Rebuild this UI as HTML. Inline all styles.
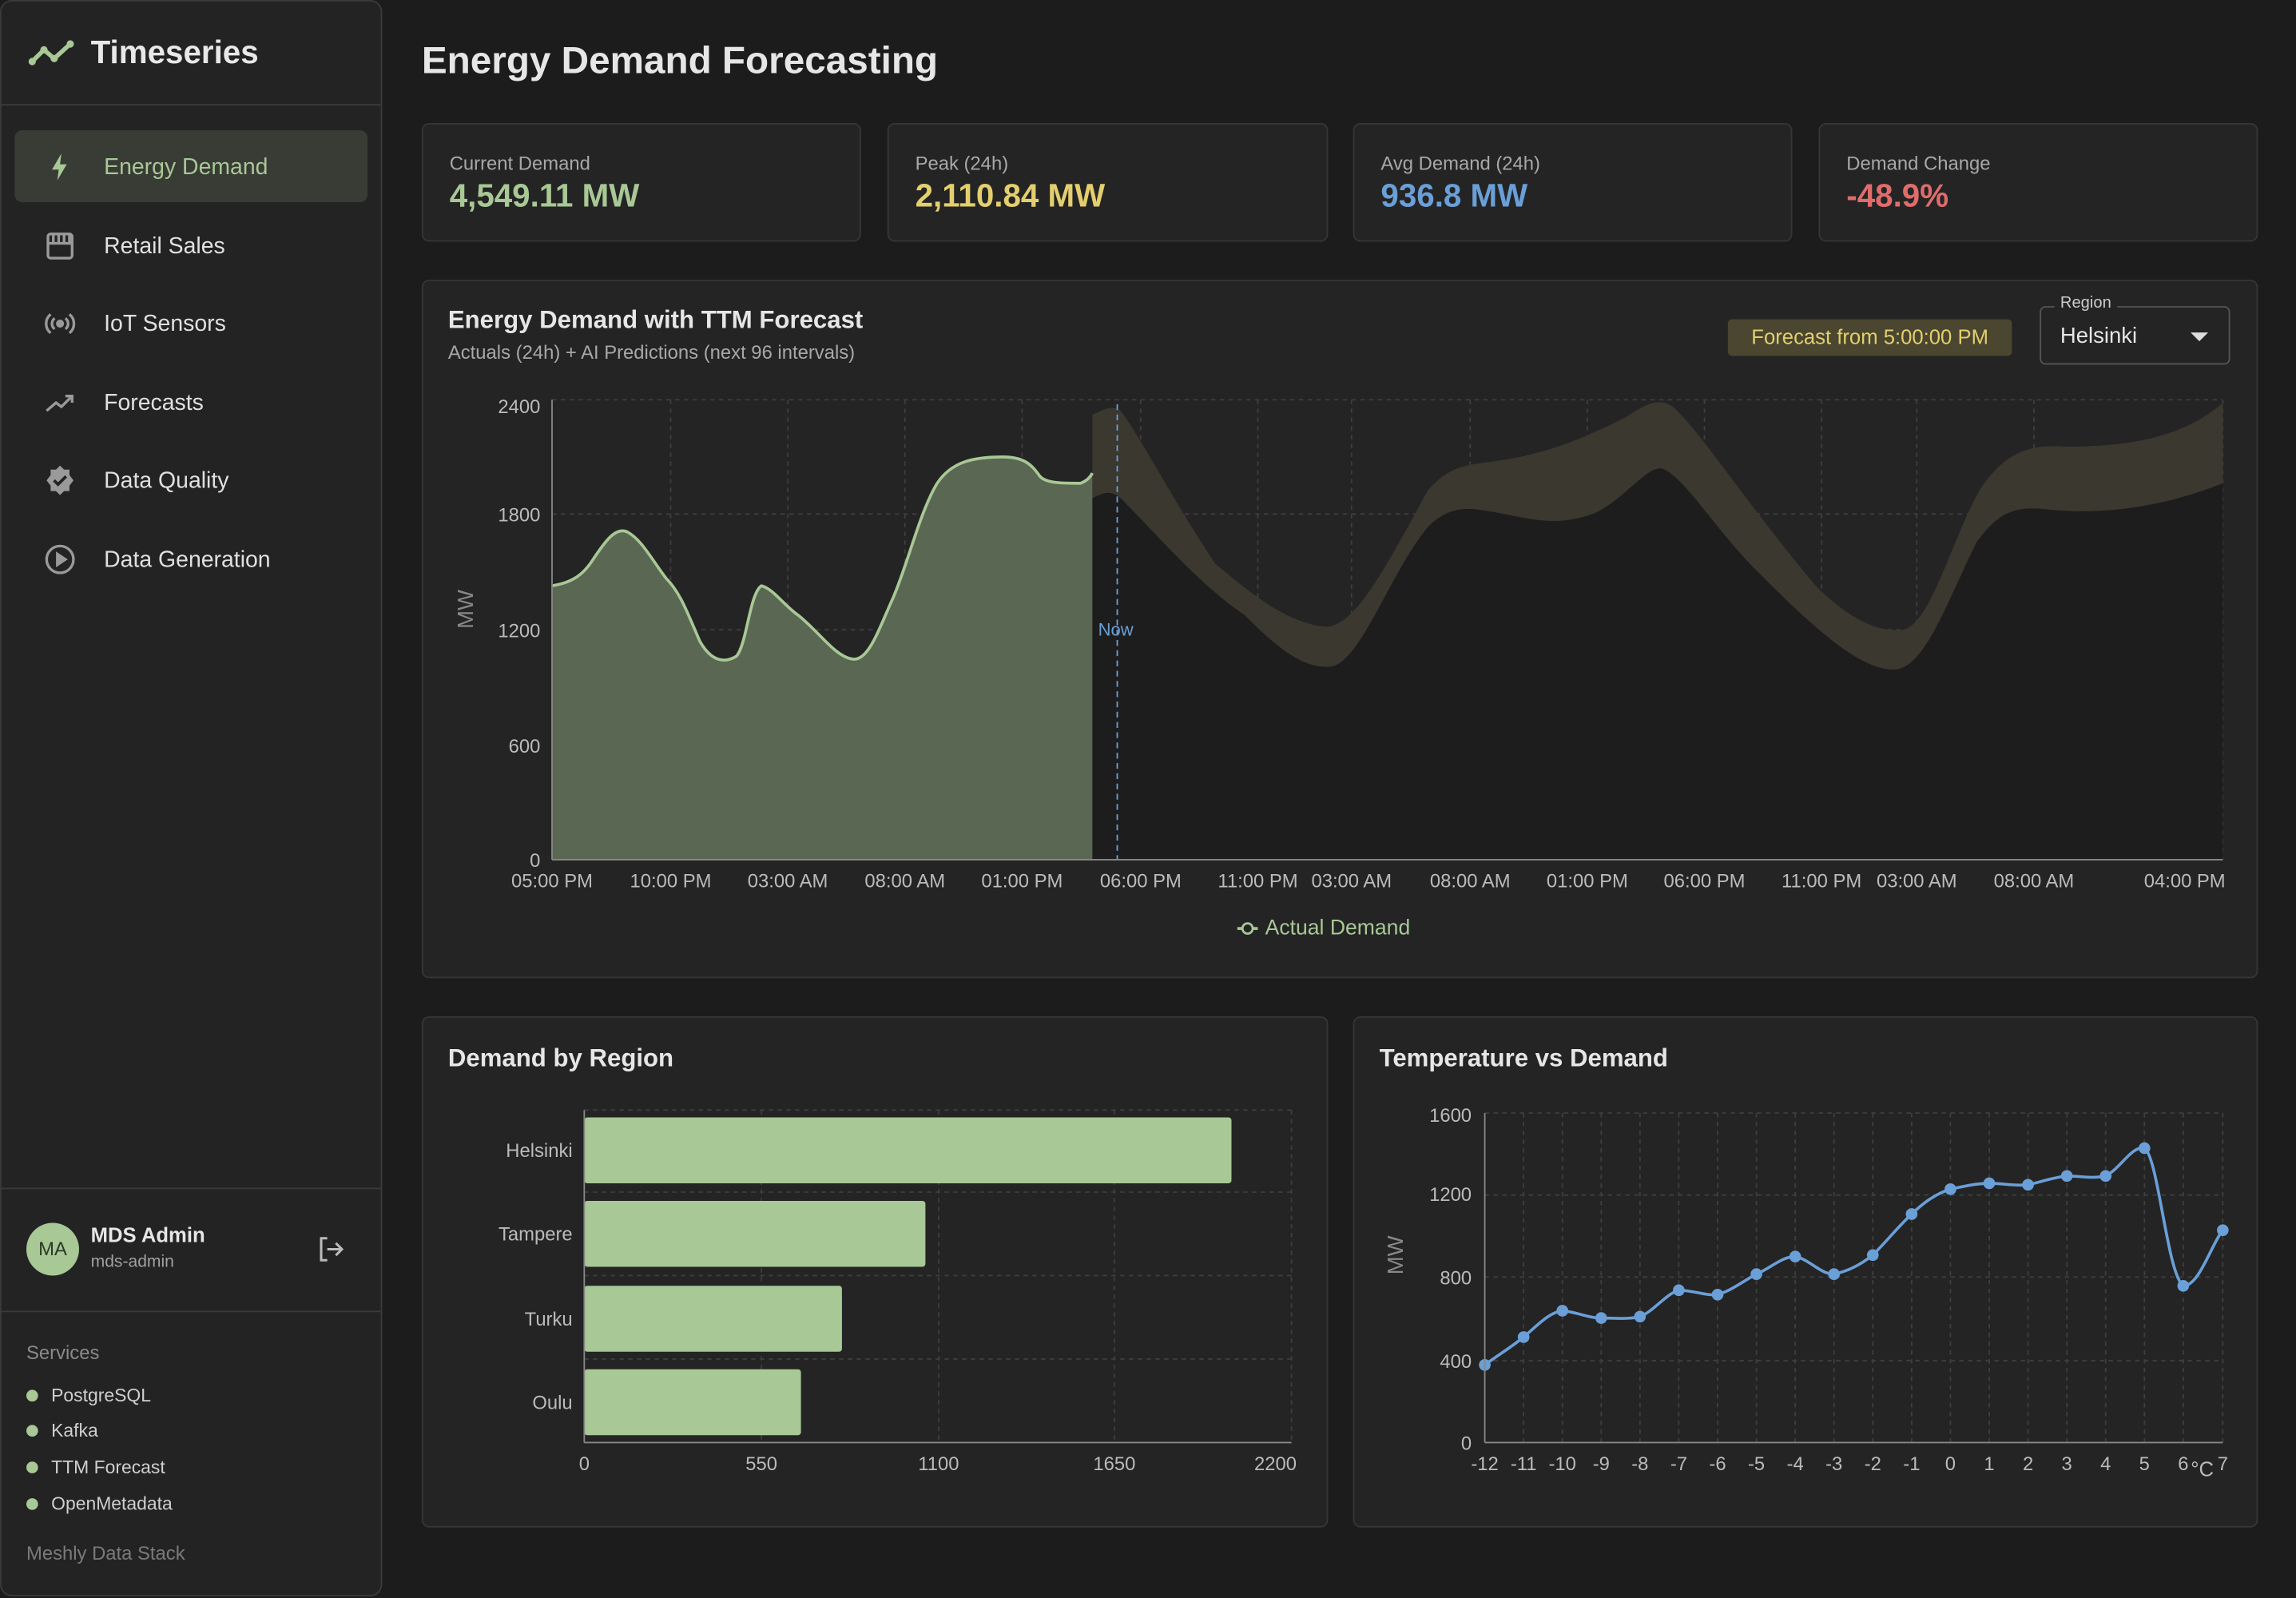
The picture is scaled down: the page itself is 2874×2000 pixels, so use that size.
<!DOCTYPE html>
<html><head><meta charset="utf-8"><style>
html,body{margin:0;padding:0;background:#1c1c1c;width:2874px;height:2000px;overflow:hidden}
#w{position:absolute;left:0;top:0;width:1568px;height:1091px;transform:scale(1.83291);transform-origin:0 0;font-family:"Liberation Sans",sans-serif;color:#e6e6e6}
.a{position:absolute}
.card{position:absolute;background:#242424;border:1px solid #363636;border-radius:5px;box-sizing:border-box}
.lbl{font-size:13px;color:#a8a8a8;position:absolute;left:18px;top:19px}
.val{font-size:22px;font-weight:bold;position:absolute;left:18px;top:36px}
.nav{position:absolute;left:10px;width:241px;height:49px;font-size:15.5px;color:#e0e0e0}
.nav svg{position:absolute;left:20px;top:14px}
.nav span{position:absolute;left:61px;top:17px}
.svc{position:absolute;left:18px;font-size:12.5px;color:#cfcfcf}
.svc i{display:inline-block;width:8px;height:8px;border-radius:50%;background:#a8c896;margin-right:9px;vertical-align:0px}
</style></head><body><div id="w">
<div class="a" style="left:0;top:0;width:261px;height:1090px;background:#232323;border:1px solid #3a3a3a;border-radius:8px;box-sizing:border-box"></div>
<div class="a" style="left:1px;top:71px;width:259px;height:1px;background:#3a3a3a"></div>
<svg class="a" style="left:19px;top:25px" width="34" height="22" viewBox="0 0 34 22"><polyline points="3,17 11,9 18,15 29,5" fill="none" stroke="#a8c896" stroke-width="3" stroke-linecap="round" stroke-linejoin="round"/><circle cx="3" cy="17" r="2.5" fill="#a8c896"/><circle cx="11" cy="9" r="2.5" fill="#a8c896"/><circle cx="18" cy="15" r="2.5" fill="#a8c896"/><circle cx="29" cy="5" r="2.5" fill="#a8c896"/></svg>
<div class="a" style="left:62px;top:23px;font-size:22px;font-weight:bold;color:#e8e8e8">Timeseries</div>
<div class="nav" style="top:89px;background:#393b35;border-radius:5px;color:#a8c896"><svg width="22" height="22" viewBox="0 0 24 24"><path d="M13 2L6 14h5l-1 8 7-12h-5z" fill="#a8c896"/></svg><span>Energy Demand</span></div>
<div class="nav" style="top:143px"><svg width="22" height="22" viewBox="0 0 24 24" fill="none" stroke="#9a9a9a" stroke-width="2"><rect x="3" y="3" width="18" height="18" rx="2"/><path d="M3 10h18M7 4v5M11 4v5M15 4v5M19 4v5"/></svg><span>Retail Sales</span></div>
<div class="nav" style="top:196px"><svg width="22" height="22" viewBox="0 0 24 24" fill="none" stroke="#9a9a9a" stroke-width="2"><circle cx="12" cy="12" r="2" fill="#9a9a9a"/><path d="M8 8a5 5 0 000 8M16 8a5 5 0 010 8M5 5a9 9 0 000 14M19 5a9 9 0 010 14"/></svg><span>IoT Sensors</span></div>
<div class="nav" style="top:250px"><svg width="22" height="22" viewBox="0 0 24 24" fill="none" stroke="#9a9a9a" stroke-width="2"><path d="M2 18l7-6 4 3 8-8M16 7h5v5"/></svg><span>Forecasts</span></div>
<div class="nav" style="top:303px"><svg width="22" height="22" viewBox="0 0 24 24"><path d="M12 1l3 3h4v4l3 4-3 4v4h-4l-3 3-3-3H5v-4l-3-4 3-4V4h4z" fill="#9a9a9a"/><path d="M7.5 12l3 3 6-6" fill="none" stroke="#232323" stroke-width="2.2"/></svg><span>Data Quality</span></div>
<div class="nav" style="top:357px"><svg width="22" height="22" viewBox="0 0 24 24" fill="none" stroke="#9a9a9a" stroke-width="2"><circle cx="12" cy="12" r="10"/><path d="M10 8l6 4-6 4z" fill="#9a9a9a"/></svg><span>Data Generation</span></div>
<div class="a" style="left:1px;top:811px;width:259px;height:1px;background:#3a3a3a"></div>
<div class="a" style="left:18px;top:835px;width:36px;height:36px;border-radius:50%;background:#a8c896;color:#2c3a26;font-size:13px;text-align:center;line-height:36px">MA</div>
<div class="a" style="left:62px;top:835px;font-size:14px;font-weight:bold">MDS Admin</div>
<div class="a" style="left:62px;top:856px;font-size:11.5px;color:#a0a0a0">mds-admin</div>
<svg class="a" style="left:216px;top:843px" width="20" height="20" viewBox="0 0 24 24" fill="none" stroke="#bbb" stroke-width="2"><path d="M9 3H4v18h5M16 7l5 5-5 5M21 12H9"/></svg>
<div class="a" style="left:1px;top:895px;width:259px;height:1px;background:#3a3a3a"></div>
<div class="a" style="left:18px;top:916px;font-size:13px;color:#8a8a8a">Services</div>
<div class="svc" style="top:946px"><i></i>PostgreSQL</div>
<div class="svc" style="top:970px"><i></i>Kafka</div>
<div class="svc" style="top:995px"><i></i>TTM Forecast</div>
<div class="svc" style="top:1020px"><i></i>OpenMetadata</div>
<div class="a" style="left:18px;top:1053px;font-size:13px;color:#7a7a7a">Meshly Data Stack</div>

<div class="a" style="left:288px;top:26px;font-size:26px;font-weight:bold;color:#e6e6e6">Energy Demand Forecasting</div>
<div class="card" style="left:288px;top:84px;width:300px;height:81px"><div class="lbl">Current Demand</div><div class="val" style="color:#a8c896">4,549.11 MW</div></div>
<div class="card" style="left:606px;top:84px;width:301px;height:81px"><div class="lbl">Peak (24h)</div><div class="val" style="color:#e3cf6e">2,110.84 MW</div></div>
<div class="card" style="left:924px;top:84px;width:300px;height:81px"><div class="lbl">Avg Demand (24h)</div><div class="val" style="color:#6a9fd8">936.8 MW</div></div>
<div class="card" style="left:1242px;top:84px;width:300px;height:81px"><div class="lbl">Demand Change</div><div class="val" style="color:#e06c6c">-48.9%</div></div>

<div class="card" style="left:288px;top:191px;width:1254px;height:477px"></div>
<div class="a" style="left:306px;top:209px;font-size:17px;font-weight:bold">Energy Demand with TTM Forecast</div>
<div class="a" style="left:306px;top:233px;font-size:13px;color:#a8a8a8">Actuals (24h) + AI Predictions (next 96 intervals)</div>
<div class="a" style="left:1180px;top:218px;width:194px;height:25px;background:#4a4630;border-radius:3px;color:#e3cf6e;font-size:14px;text-align:center;line-height:25px">Forecast from 5:00:00 PM</div>
<div class="a" style="left:1393px;top:209px;width:130px;height:40px;border:1px solid #555;border-radius:4px;box-sizing:border-box"></div>
<div class="a" style="left:1403px;top:201px;background:#242424;padding:0 4px;font-size:11px;color:#ccc">Region</div>
<div class="a" style="left:1407px;top:221px;font-size:15px">Helsinki</div>
<svg class="a" style="left:1496px;top:226px" width="12" height="8"><path d="M0 1h12L6 7z" fill="#ddd"/></svg>

<svg class="a" style="left:0;top:0" width="1568" height="1091" font-family="Liberation Sans, sans-serif">
<g stroke="#3e3e3e" stroke-dasharray="3,3" stroke-width="1">
<line x1="377" x2="1518" y1="273" y2="273"/><line x1="377" x2="1518" y1="351" y2="351"/><line x1="377" x2="1518" y1="430" y2="430"/><line x1="377" x2="1518" y1="509" y2="509"/>
<line x1="458" x2="458" y1="273" y2="587"/><line x1="538" x2="538" y1="273" y2="587"/><line x1="618" x2="618" y1="273" y2="587"/><line x1="698" x2="698" y1="273" y2="587"/><line x1="779" x2="779" y1="273" y2="587"/><line x1="859" x2="859" y1="273" y2="587"/><line x1="923" x2="923" y1="273" y2="587"/><line x1="1004" x2="1004" y1="273" y2="587"/><line x1="1084" x2="1084" y1="273" y2="587"/><line x1="1164" x2="1164" y1="273" y2="587"/><line x1="1244" x2="1244" y1="273" y2="587"/><line x1="1309" x2="1309" y1="273" y2="587"/><line x1="1389" x2="1389" y1="273" y2="587"/><line x1="1518" x2="1518" y1="273" y2="587"/>
</g>
<path d="M746,340 C755,336 760,333 770,345 C790,365 820,400 850,420 C870,440 890,458 910,455 C930,450 950,390 975,360 C985,350 995,346 1010,348 C1040,352 1060,362 1090,350 C1110,340 1125,318 1135,320 C1150,325 1170,360 1200,390 C1230,420 1270,460 1295,457 C1315,455 1330,410 1350,370 C1365,350 1375,345 1400,348 C1440,352 1480,345 1518,330 L1518,587 L746,587 Z" fill="#1d1d1d"/>
<path d="M746,283 C752,281 758,276 765,280 C780,300 800,340 830,385 C860,410 880,425 905,428 C925,428 945,390 975,335 C990,318 1000,318 1020,315 C1060,310 1090,295 1110,285 C1125,275 1135,270 1145,280 C1165,300 1190,340 1240,400 C1265,425 1285,432 1300,430 C1320,425 1335,360 1355,330 C1370,310 1385,303 1410,305 C1450,305 1490,300 1518,275 L1518,330 C1480,345 1440,352 1400,348 C1375,345 1365,350 1350,370 C1330,410 1315,455 1295,457 C1270,460 1230,420 1200,390 C1170,360 1150,325 1135,320 C1125,318 1110,340 1090,350 C1060,362 1040,352 1010,348 C995,346 985,350 975,360 C950,390 930,450 910,455 C890,458 870,440 850,420 C820,400 790,365 770,345 C760,333 755,336 746,340 Z" fill="#3a382f"/>
<path d="M377,400 C390,398 398,393 405,382 C413,370 420,360 428,363 C438,368 445,382 455,395 C465,405 470,420 478,438 C486,452 495,453 503,448 C510,440 512,405 520,400 C528,402 535,413 545,420 C560,432 570,448 582,450 C593,452 600,430 610,408 C620,385 628,350 640,330 C650,315 665,312 685,312 C700,312 705,318 710,325 C714,330 725,330 738,330 C743,328 745,325 746,323 L746,587 L377,587 Z" fill="#5a6753"/>
<path d="M377,400 C390,398 398,393 405,382 C413,370 420,360 428,363 C438,368 445,382 455,395 C465,405 470,420 478,438 C486,452 495,453 503,448 C510,440 512,405 520,400 C528,402 535,413 545,420 C560,432 570,448 582,450 C593,452 600,430 610,408 C620,385 628,350 640,330 C650,315 665,312 685,312 C700,312 705,318 710,325 C714,330 725,330 738,330 C743,328 745,325 746,323" fill="none" stroke="#a8c896" stroke-width="2"/>
<line x1="763" x2="763" y1="276" y2="587" stroke="#6a9fd8" stroke-dasharray="4,3"/>
<text x="750" y="434" font-size="12" fill="#6a9fd8">Now</text>
<line x1="377" x2="377" y1="273" y2="587" stroke="#888"/><line x1="377" x2="1518" y1="587" y2="587" stroke="#888"/>
<g font-size="13" fill="#bbb" text-anchor="end"><text x="369" y="282">2400</text><text x="369" y="356">1800</text><text x="369" y="435">1200</text><text x="369" y="514">600</text><text x="369" y="592">0</text></g>
<text x="323" y="416" font-size="15" fill="#888" text-anchor="middle" transform="rotate(-90 323 416)">MW</text>
<g font-size="13" fill="#bbb" text-anchor="middle"><text x="377" y="606">05:00 PM</text><text x="458" y="606">10:00 PM</text><text x="538" y="606">03:00 AM</text><text x="618" y="606">08:00 AM</text><text x="698" y="606">01:00 PM</text><text x="779" y="606">06:00 PM</text><text x="859" y="606">11:00 PM</text><text x="923" y="606">03:00 AM</text><text x="1004" y="606">08:00 AM</text><text x="1084" y="606">01:00 PM</text><text x="1164" y="606">06:00 PM</text><text x="1244" y="606">11:00 PM</text><text x="1309" y="606">03:00 AM</text><text x="1389" y="606">08:00 AM</text><text x="1492" y="606">04:00 PM</text></g>
<line x1="845" x2="859" y1="634" y2="634" stroke="#a8c896" stroke-width="2"/><circle cx="852" cy="634" r="3.5" fill="#242424" stroke="#a8c896" stroke-width="1.5"/>
<text x="864" y="638" font-size="14.5" fill="#a8c896">Actual Demand</text>
</svg>

<div class="card" style="left:288px;top:694px;width:619px;height:349px"></div>
<div class="card" style="left:924px;top:694px;width:618px;height:349px"></div>
<div class="a" style="left:306px;top:713px;font-size:17px;font-weight:bold">Demand by Region</div>
<div class="a" style="left:942px;top:713px;font-size:17px;font-weight:bold">Temperature vs Demand</div>
<svg class="a" style="left:0;top:0" width="1568" height="1091" font-family="Liberation Sans, sans-serif">
<g stroke="#3e3e3e" stroke-dasharray="3,3"><line x1="520" x2="520" y1="758" y2="985"/><line x1="641" x2="641" y1="758" y2="985"/><line x1="761" x2="761" y1="758" y2="985"/><line x1="882" x2="882" y1="758" y2="985"/><line x1="399" x2="882" y1="758" y2="758"/><line x1="399" x2="882" y1="814" y2="814"/><line x1="399" x2="882" y1="871" y2="871"/><line x1="399" x2="882" y1="928" y2="928"/></g>
<g fill="#a8c896"><rect x="399" y="763" width="442" height="45" rx="2"/><rect x="399" y="820" width="233" height="45" rx="2"/><rect x="399" y="878" width="176" height="45" rx="2"/><rect x="399" y="935" width="148" height="45" rx="2"/></g>
<line x1="399" x2="399" y1="758" y2="985" stroke="#888"/><line x1="399" x2="882" y1="985" y2="985" stroke="#888"/>
<g font-size="13" fill="#bbb" text-anchor="end"><text x="391" y="790">Helsinki</text><text x="391" y="847">Tampere</text><text x="391" y="905">Turku</text><text x="391" y="962">Oulu</text></g>
<g font-size="13" fill="#bbb" text-anchor="middle"><text x="399" y="1004">0</text><text x="520" y="1004">550</text><text x="641" y="1004">1100</text><text x="761" y="1004">1650</text><text x="871" y="1004">2200</text></g>

<g stroke="#3e3e3e" stroke-dasharray="3,3"><line x1="1014" x2="1518" y1="760" y2="760"/><line x1="1014" x2="1518" y1="816" y2="816"/><line x1="1014" x2="1518" y1="872" y2="872"/><line x1="1014" x2="1518" y1="929" y2="929"/>
<line x1="1040.5" x2="1040.5" y1="760" y2="985"/><line x1="1067" x2="1067" y1="760" y2="985"/><line x1="1093.5" x2="1093.5" y1="760" y2="985"/><line x1="1120" x2="1120" y1="760" y2="985"/><line x1="1146.5" x2="1146.5" y1="760" y2="985"/><line x1="1173" x2="1173" y1="760" y2="985"/><line x1="1199.5" x2="1199.5" y1="760" y2="985"/><line x1="1226" x2="1226" y1="760" y2="985"/><line x1="1252.5" x2="1252.5" y1="760" y2="985"/><line x1="1279" x2="1279" y1="760" y2="985"/><line x1="1305.5" x2="1305.5" y1="760" y2="985"/><line x1="1332" x2="1332" y1="760" y2="985"/><line x1="1358.5" x2="1358.5" y1="760" y2="985"/><line x1="1385" x2="1385" y1="760" y2="985"/><line x1="1411.5" x2="1411.5" y1="760" y2="985"/><line x1="1438" x2="1438" y1="760" y2="985"/><line x1="1464.5" x2="1464.5" y1="760" y2="985"/><line x1="1491" x2="1491" y1="760" y2="985"/><line x1="1518" x2="1518" y1="760" y2="985"/></g>
<path d="M1014,932 C1022,926 1032,920 1040.5,913 C1050,905 1058,896 1067,895 C1077,896 1085,900 1093.5,900 C1103,900 1112,901 1120,899 C1130,895 1137,884 1146.5,881 C1156,881 1165,885 1173,884 C1183,881 1190,875 1199.5,870 C1209,866 1217,858 1226,858 C1236,860 1243,870 1252.5,870 C1262,868 1270,864 1279,857 C1288,848 1296,838 1305.5,829 C1314,821 1322,815 1332,812 C1341,810 1350,808 1358.5,808 C1368,808 1376,810 1385,809 C1394,807 1402,804 1411.5,803 C1421,803 1429,805 1438,803 C1448,798 1456,782 1464.5,784 C1474,790 1480,870 1491,878 C1502,878 1510,850 1518,840" fill="none" stroke="#6a9fd8" stroke-width="2"/>
<g fill="#6a9fd8"><circle cx="1014" cy="932" r="4"/><circle cx="1040.5" cy="913" r="4"/><circle cx="1067" cy="895" r="4"/><circle cx="1093.5" cy="900" r="4"/><circle cx="1120" cy="899" r="4"/><circle cx="1146.5" cy="881" r="4"/><circle cx="1173" cy="884" r="4"/><circle cx="1199.5" cy="870" r="4"/><circle cx="1226" cy="858" r="4"/><circle cx="1252.5" cy="870" r="4"/><circle cx="1279" cy="857" r="4"/><circle cx="1305.5" cy="829" r="4"/><circle cx="1332" cy="812" r="4"/><circle cx="1358.5" cy="808" r="4"/><circle cx="1385" cy="809" r="4"/><circle cx="1411.5" cy="803" r="4"/><circle cx="1438" cy="803" r="4"/><circle cx="1464.5" cy="784" r="4"/><circle cx="1491" cy="878" r="4"/><circle cx="1518" cy="840" r="4"/></g>
<line x1="1014" x2="1014" y1="760" y2="985" stroke="#888"/><line x1="1014" x2="1518" y1="985" y2="985" stroke="#888"/>
<g font-size="13" fill="#bbb" text-anchor="end"><text x="1005" y="766">1600</text><text x="1005" y="820">1200</text><text x="1005" y="877">800</text><text x="1005" y="934">400</text><text x="1005" y="990">0</text></g>
<text x="958" y="857" font-size="15" fill="#888" text-anchor="middle" transform="rotate(-90 958 857)">MW</text>
<g font-size="13" fill="#bbb" text-anchor="middle"><text x="1014" y="1004">-12</text><text x="1040.5" y="1004">-11</text><text x="1067" y="1004">-10</text><text x="1093.5" y="1004">-9</text><text x="1120" y="1004">-8</text><text x="1146.5" y="1004">-7</text><text x="1173" y="1004">-6</text><text x="1199.5" y="1004">-5</text><text x="1226" y="1004">-4</text><text x="1252.5" y="1004">-3</text><text x="1279" y="1004">-2</text><text x="1305.5" y="1004">-1</text><text x="1332" y="1004">0</text><text x="1358.5" y="1004">1</text><text x="1385" y="1004">2</text><text x="1411.5" y="1004">3</text><text x="1438" y="1004">4</text><text x="1464.5" y="1004">5</text><text x="1491" y="1004">6</text><text x="1518" y="1004">7</text><text x="1504" y="1008" font-size="14">°C</text></g>
</svg>
</div></body></html>
